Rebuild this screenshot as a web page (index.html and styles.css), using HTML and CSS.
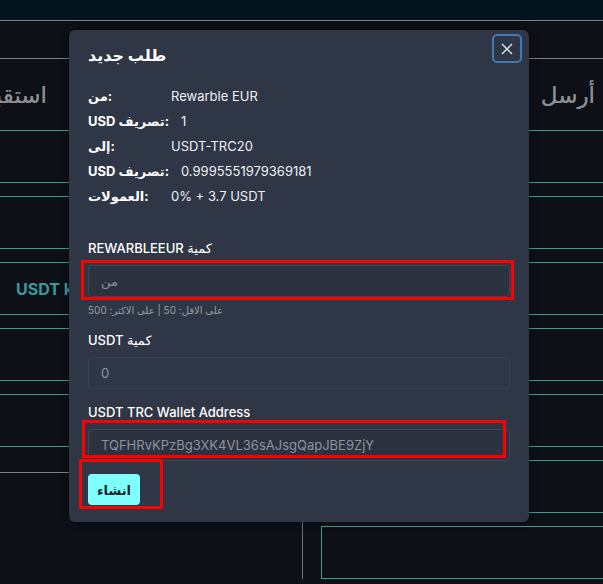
FILE: index.html
```html
<!DOCTYPE html>
<html lang="ar">
<head>
    <meta charset="UTF-8">
    <meta name="viewport" content="width=device-width, initial-scale=1.0">
    <title>طلب جديد</title>
    <link rel="stylesheet" href="styles.css">
</head>
<body>
    <div class="topbar"></div>
    <div class="nav"></div>
    <div class="panels">
        <div class="panel panel-left">
            <div class="panel-head">
                <h2 class="head-title">استقبال</h2>
            </div>
            <div class="boxes">
                <div class="box"></div>
                <div class="box"></div>
                <div class="box"><span class="box-label">USDT kucoin</span></div>
                <div class="box"></div>
                <div class="box"></div>
            </div>
            <div class="panel-foot"></div>
        </div>
        <div class="panel panel-right">
            <div class="panel-head">
                <h2 class="head-title">أرسل</h2>
            </div>
            <div class="boxes">
                <div class="box"></div>
                <div class="box"></div>
                <div class="box"></div>
                <div class="box"></div>
                <div class="box"></div>
                <div class="box"></div>
                <div class="box"></div>
            </div>
        </div>
    </div>

    <div class="modal">
        <div class="modal-header">
            <h3 class="modal-title">طلب جديد</h3>
            <button type="button" class="close">
                <svg width="12" height="12" viewBox="0 0 12 12">
                    <path d="M1 1 L11 11 M11 1 L1 11" stroke="#e4e7eb" stroke-width="1.3" fill="none"/>
                </svg>
            </button>
        </div>
        <div class="info">
            <span class="info-key">من:</span>
            <span class="info-val">Rewarble EUR</span>
            <span class="info-key">USD تصريف:</span>
            <span class="info-val shift">1</span>
            <span class="info-key">إلى:</span>
            <span class="info-val">USDT-TRC20</span>
            <span class="info-key">USD تصريف:</span>
            <span class="info-val shift">0.9995551979369181</span>
            <span class="info-key">العمولات:</span>
            <span class="info-val">0% + 3.7 USDT</span>
        </div>
        <form class="order-form">
            <label class="field-label" for="amountFrom">REWARBLEEUR كمية</label>
            <input class="field" type="text" id="amountFrom" placeholder="من">
            <div class="hint">على الاقل: 50 | على الاكثر: 500</div>

            <label class="field-label gap" for="amountTo">USDT كمية</label>
            <input class="field" type="text" id="amountTo" placeholder="0" disabled>

            <label class="field-label gap" for="wallet">USDT TRC Wallet Address</label>
            <input class="field" type="text" id="wallet" value="TQFHRvKPzBg3XK4VL36sAJsgQapJBE9ZjY">

            <button type="submit" class="submit">انشاء</button>
        </form>
    </div>

    <div class="mark mark-from"></div>
    <div class="mark mark-wallet"></div>
    <div class="mark mark-submit"></div>
</body>
</html>
```

FILE: styles.css
```css
body {
    margin: 0;
    width: 603px;
    height: 584px;
    overflow: hidden;
    background-color: #0d1016;
    font-family: Inter, "Noto Sans", "DejaVu Sans", sans-serif;
}
.topbar {
    height: 20px;
    background-color: #03141f;
    border-bottom: 1px solid #7a7f86;
}
.nav {
    height: 37px;
    border-bottom: 1px solid #7a7f86;
}
.panels {
    display: flex;
    flex-direction: row;
}
.panel {
    display: flex;
    flex-direction: column;
}
.panel-left {
    width: 302px;
    flex-shrink: 0;
}
.panel-right {
    flex: 1;
    min-width: 0;
    border-left: 1px solid #6d7178;
}
.panel-head {
    height: 71px;
    display: flex;
    align-items: center;
}
.head-title {
    margin: 0;
    font-size: 23px;
    font-weight: 400;
    color: #8b8e93;
    white-space: nowrap;
    direction: rtl;
    text-shadow: 0 0 0.6px #8b8e93;
}
.panel-left .head-title {
    width: 47px;
}
.panel-right .panel-head {
    justify-content: flex-end;
    padding-right: 8px;
}
.boxes {
    display: flex;
    flex-direction: column;
    gap: 13px;
}
.box {
    height: 53px;
    box-sizing: border-box;
    border-top: 1px solid #3e9e94;
    border-bottom: 1px solid #3e9e94;
    display: flex;
    align-items: center;
}
.panel-right .box:last-child {
    margin-left: 18px;
    border-left: 1px solid #3e9e94;
}
.box-label {
    padding-left: 16px;
    font-size: 16px;
    font-weight: 700;
    color: #3c9a9a;
}
.panel-foot {
    margin-top: 25px;
    border-top: 1px solid #7a7f86;
}

.modal {
    position: absolute;
    left: 69px;
    top: 30px;
    width: 460px;
    height: 492px;
    box-sizing: border-box;
    padding: 0 19px;
    background-color: #2f3646;
    border-radius: 6px;
    box-shadow: 0 0 8px rgba(0, 0, 0, 0.4);
    color: #ffffff;
}
.modal-header {
    display: flex;
    justify-content: space-between;
    align-items: flex-start;
    height: 53px;
}
.modal-title {
    margin: 15px 0 0 0;
    font-size: 16px;
    font-weight: 700;
    line-height: 20px;
}
.close {
    margin: 4px -12px 0 0;
    width: 30px;
    height: 29px;
    box-sizing: border-box;
    border: 2px solid #3e7cb8;
    border-radius: 5px;
    background-color: unset;
    display: flex;
    justify-content: center;
    align-items: center;
    padding: 0;
}
.info {
    display: grid;
    grid-template-columns: 83px 1fr;
    grid-auto-rows: 25px;
    align-items: center;
    font-size: 13px;
}
.info-key {
    font-weight: 700;
}
.info-val {
    color: #eef0f3;
}
.shift {
    padding-left: 10px;
}
.order-form {
    display: flex;
    flex-direction: column;
    align-items: flex-start;
    margin-top: 31px;
}
.field-label {
    font-size: 13px;
    font-weight: 500;
    line-height: 18px;
    margin-bottom: 8px;
}
.field-label.gap {
    margin-top: 14px;
}
.field {
    width: 100%;
    height: 32px;
    box-sizing: border-box;
    padding: 0 12px;
    background-color: #2c3240;
    border: 1px solid #3e4555;
    border-radius: 4px;
    color: #8e939c;
    font-family: inherit;
    font-size: 13px;
    outline: none;
}
.field::placeholder {
    color: #8e939c;
}
.field:disabled {
    background-color: #2f3646;
    border-color: #394050;
    color: #80858e;
}
.hint {
    margin-top: 6px;
    font-size: 10px;
    line-height: 14px;
    color: #9a9ea5;
}
.submit {
    margin-top: 13px;
    width: 52px;
    height: 31px;
    border: none;
    border-radius: 4px;
    background-color: #80ffff;
    color: #1a1f27;
    font-family: inherit;
    font-size: 13px;
    font-weight: 700;
}

.mark {
    position: absolute;
    box-sizing: border-box;
    border: 3px solid #ff0000;
}
.mark-from {
    left: 81px;
    top: 260px;
    width: 433px;
    height: 40px;
}
.mark-wallet {
    left: 82px;
    top: 420px;
    width: 424px;
    height: 38px;
}
.mark-submit {
    left: 79px;
    top: 459px;
    width: 84px;
    height: 50px;
}
```
